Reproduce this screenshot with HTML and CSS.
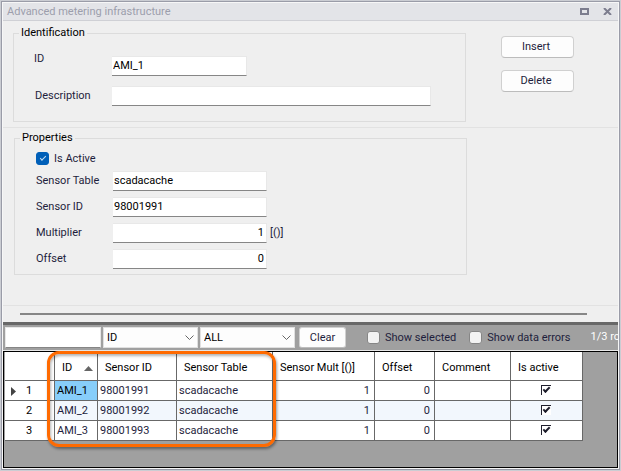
FILE: index.html
```html
<!DOCTYPE html>
<html lang="en">
<head>
    <meta charset="UTF-8">
    <meta name="viewport" content="width=device-width, initial-scale=1" />
    <title>Advanced metering infrastructure</title>
    <link rel="stylesheet" href="styles.css">
</head>
<body>
    <div class="window">
        <header class="titlebar">
            <h1>Advanced metering infrastructure</h1>
            <button class="title-button" type="button" aria-label="Maximize">
                <svg width="9" height="7" viewBox="0 0 9 7"><path d="M1 1h7v5H1z" fill="none" stroke="#7c7d8e" stroke-width="2" /></svg>
            </button>
            <button class="title-button" type="button" aria-label="Close">
                <svg width="9" height="7" viewBox="0 0 9 7"><path d="M1 0l7 7M8 0L1 7" fill="none" stroke="#7c7d8e" stroke-width="2" /></svg>
            </button>
        </header>

        <form class="panel identification">
            <fieldset class="group">
                <legend>Identification</legend>
                <div class="field id-field">
                    <label for="ami-id">ID</label>
                    <input class="text-box id-box" id="ami-id" type="text" value="AMI_1">
                </div>
                <div class="field">
                    <label for="description">Description</label>
                    <input class="text-box description-box" id="description" type="text">
                </div>
            </fieldset>
            <div class="actions">
                <button class="button" type="button">Insert</button>
                <button class="button" type="button">Delete</button>
            </div>
        </form>

        <form class="panel properties">
            <fieldset class="group">
                <legend>Properties</legend>
                <label class="check is-active"><input type="checkbox" checked> Is Active</label>
                <div class="field">
                    <label for="sensor-table">Sensor Table</label>
                    <input class="text-box" id="sensor-table" type="text" value="scadacache">
                </div>
                <div class="field">
                    <label for="sensor-id">Sensor ID</label>
                    <input class="text-box" id="sensor-id" type="text" value="98001991">
                </div>
                <div class="field">
                    <label for="multiplier">Multiplier</label>
                    <input class="text-box number" id="multiplier" type="text" value="1">
                    <span class="unit">[()]</span>
                </div>
                <div class="field">
                    <label for="offset">Offset</label>
                    <input class="text-box number" id="offset" type="text" value="0">
                </div>
            </fieldset>
        </form>

        <div class="splitter"></div>

        <div class="toolbar">
            <input class="filter-text" type="text" aria-label="Filter text">
            <div class="combo">
                <select aria-label="Filter column"><option>ID</option></select>
                <svg width="9" height="5" viewBox="0 0 9 5"><path d="M0.5 0.5l4 4 4-4" fill="none" stroke="#666" /></svg>
            </div>
            <div class="combo">
                <select aria-label="Filter value"><option>ALL</option></select>
                <svg width="9" height="5" viewBox="0 0 9 5"><path d="M0.5 0.5l4 4 4-4" fill="none" stroke="#666" /></svg>
            </div>
            <button class="button clear" type="button">Clear</button>
            <label class="check"><input type="checkbox"> Show selected</label>
            <label class="check"><input type="checkbox"> Show data errors</label>
            <span class="count">1/3 rows</span>
        </div>

        <div class="grid">
            <table>
                <colgroup>
                    <col class="col-row"><col class="col-id"><col class="col-sensor"><col class="col-table">
                    <col class="col-mult"><col class="col-offset"><col class="col-comment"><col class="col-active">
                </colgroup>
                <thead>
                    <tr>
                        <th></th>
                        <th>ID <svg class="sort" width="9" height="5" viewBox="0 0 9 5"><path d="M0 5L4.500 0L9 5z" fill="#666" /></svg></th>
                        <th>Sensor ID</th>
                        <th>Sensor Table</th>
                        <th>Sensor Mult [()]</th>
                        <th>Offset</th>
                        <th>Comment</th>
                        <th>Is active</th>
                    </tr>
                </thead>
                <tbody>
                    <tr>
                        <td class="row-no"><svg class="marker" width="5" height="9" viewBox="0 0 5 9"><path d="M0 0l5 4.500L0 9z" fill="#444" /></svg>1</td>
                        <td class="selected">AMI_1</td>
                        <td>98001991</td>
                        <td>scadacache</td>
                        <td class="number">1</td>
                        <td class="number">0</td>
                        <td></td>
                        <td class="active"><input type="checkbox" aria-label="AMI_1 active" checked></td>
                    </tr>
                    <tr>
                        <td class="row-no">2</td>
                        <td>AMI_2</td>
                        <td>98001992</td>
                        <td>scadacache</td>
                        <td class="number">1</td>
                        <td class="number">0</td>
                        <td></td>
                        <td class="active"><input type="checkbox" aria-label="AMI_2 active" checked></td>
                    </tr>
                    <tr>
                        <td class="row-no">3</td>
                        <td>AMI_3</td>
                        <td>98001993</td>
                        <td>scadacache</td>
                        <td class="number">1</td>
                        <td class="number">0</td>
                        <td></td>
                        <td class="active"><input type="checkbox" aria-label="AMI_3 active" checked></td>
                    </tr>
                </tbody>
            </table>
            <div class="highlight"></div>
        </div>
    </div>
</body>
</html>
```
FILE: styles.css
```css
* {
    margin: 0;
    padding: 0;
    box-sizing: border-box;
}
body {
    display: flex;
    min-height: 100vh;
    padding: 1px;
    background-color: #cbcdd3;
    font-family: Tahoma, Roboto, sans-serif;
    font-size: 11px;
    line-height: 14px;
    color: #1e1e3c;
}
input, select, button {
    font: inherit;
    color: inherit;
}
.window {
    flex: 1;
    min-width: 0;
    display: flex;
    flex-direction: column;
    border: 1px solid #9a9ca8;
    outline: 1px solid #f7f7f7;
    outline-offset: -2px;
    padding: 1px;
    background-color: #efefef;
}

/* title bar */
.titlebar {
    display: flex;
    align-items: center;
    height: 18px;
    gap: 14px;
    padding: 0 6px 0 4px;
    background-color: #e3e4e8;
    border-bottom: 1px solid #cfd0d5;
}
.titlebar h1 {
    flex: 1;
    font-size: 11px;
    font-weight: normal;
    color: #9c9eac;
}
.title-button {
    display: flex;
    border: none;
    background: none;
}

/* form panels */
.panel {
    display: flex;
    align-items: flex-start;
    border-bottom: 1px solid #e2e2e2;
}
.identification {
    padding: 5px 10px;
}
.properties {
    padding: 3px 11px 30px;
}
.group {
    flex: 0 1 453px;
    min-width: 0;
    border: 1px solid #dcdcdc;
}
.group legend {
    margin-left: 5px;
    padding: 0 2px;
    color: #000;
}
.field, .is-active {
    margin-left: 21px;
}
.field {
    display: flex;
    align-items: center;
    height: 20px;
    margin-bottom: 6px;
}
.field label {
    flex: 0 0 77px;
}
.identification .field {
    margin: 10px 0 15px 21px;
}
.identification .id-field {
    align-items: flex-start;
    margin: 16px 0 0 20px;
}
.id-field label {
    flex-basis: 78px;
    margin-top: -4px;
}
.text-box {
    flex: 0 1 154px;
    min-width: 0;
    height: 20px;
    padding: 0 2px 1px 1px;
    border: 1px solid #e8e8e8;
    border-left: none;
    border-bottom-color: #868686;
    background-color: #fff;
    color: #000;
}
.id-box {
    flex-basis: 135px;
}
.description-box {
    flex-basis: 319px;
}
.number {
    text-align: right;
}
.unit {
    margin-left: 3px;
}
.actions {
    display: flex;
    flex-direction: column;
    gap: 12px;
    margin: 10px 0 0 35px;
}
.button {
    width: 73px;
    height: 22px;
    border: 1px solid #d0d0d0;
    border-bottom-color: #bcbcbc;
    border-radius: 4px;
    background-color: #fdfdfd;
}
.actions .button {
    padding-right: 3px;
}

/* tick boxes */
.check {
    display: flex;
    align-items: center;
    gap: 5px;
    white-space: nowrap;
}
.check input {
    appearance: none;
    flex: none;
    position: relative;
    width: 13px;
    height: 13px;
    border: 1px solid #868686;
    border-radius: 3px;
    background-color: #f3f3f3;
}
.check input:checked {
    border-color: #005fb8;
    background-color: #005fb8;
}
.check input:checked::after {
    content: "";
    position: absolute;
    top: 3px;
    left: 3px;
    width: 5px;
    height: 2px;
    border: solid #c8e0f4;
    border-width: 0 0 1px 1px;
    transform: rotate(-45deg);
}
.is-active {
    height: 13px;
    margin-top: 7px;
    margin-bottom: 6px;
}
.properties .field:last-child {
    margin-bottom: 5px;
}

.splitter {
    height: 2px;
    margin: 7px 31px 7px 17px;
    background-color: #868686;
}

/* filter bar */
.toolbar {
    display: flex;
    align-items: center;
    height: 29px;
    padding-left: 2px;
    overflow: hidden;
    border-top: 3px solid #686868;
    border-bottom: 1px solid #e8e8e8;
    background-color: #a0a0a0;
}
.toolbar > * {
    flex: none;
}
.filter-text {
    width: 96px;
    height: 21px;
    margin-right: 2px;
    padding: 0 3px;
    border: 1px solid #e8e8e8;
    border-bottom-color: #868686;
    background-color: #fff;
}
.combo {
    position: relative;
    width: 95px;
    height: 21px;
    margin-right: 2px;
}
.combo select {
    appearance: none;
    width: 100%;
    height: 100%;
    padding-left: 3px;
    border: 1px solid #e0e0e0;
    border-radius: 0;
    background-color: #fdfdfd;
    color: #000;
}
.combo svg {
    position: absolute;
    top: 8px;
    right: 4px;
}
.clear {
    width: 47px;
    height: 21px;
    margin-left: 2px;
    border-radius: 3px;
}
.toolbar .check {
    margin-left: 21px;
}
.toolbar .check + .check {
    margin-left: 13px;
}
.count {
    margin-left: 20px;
    padding-bottom: 2px;
    color: #fff;
    white-space: nowrap;
}

/* data grid */
.grid {
    position: relative;
    flex: 1;
    min-height: 117px;
    padding-left: 1px;
    border: 1px solid #000;
    background-color: #a0a0a0;
}
table {
    table-layout: fixed;
    width: 578px;
    border-spacing: 0;
    background-color: #fff;
}
.col-row { width: 50px; }
.col-id { width: 43px; }
.col-sensor { width: 79px; }
.col-table { width: 96px; }
.col-mult { width: 102px; }
.col-offset { width: 60px; }
.col-comment { width: 76px; }
.col-active { width: 72px; }
th, td {
    border: solid #686868;
    border-width: 0 1px 1px 0;
    white-space: nowrap;
    text-align: left;
}
th {
    height: 29px;
    padding: 3px 0 0 7px;
    font-weight: normal;
    color: #000;
}
td {
    height: 20px;
    padding: 0 2px;
}
tbody tr:nth-child(even) {
    background-color: #f2f7fd;
}
tbody tr:nth-child(even) .row-no {
    background-color: #fff;
}
td.number {
    text-align: right;
    padding-right: 4px;
}
td.selected {
    background-color: #87cefa;
    color: #000;
}
td.row-no {
    position: relative;
    padding-left: 21px;
    color: #000;
}
.sort {
    margin-left: 9px;
}
.marker {
    position: absolute;
    top: 6px;
    left: 6px;
}
td.active {
    padding: 0 4px 1px 2px;
}
.active input {
    appearance: none;
    display: block;
    position: relative;
    width: 10px;
    height: 10px;
    margin: 0 auto;
    border: solid #1e1e2c;
    border-width: 1px 0 0 1px;
    background-color: #fff;
}
.active input:checked::after {
    content: "";
    position: absolute;
    top: 1px;
    left: 1px;
    width: 5px;
    height: 2px;
    border: solid #1e1e2c;
    border-width: 0 0 2px 2px;
    transform: rotate(-45deg);
}

/* frame over the identifying columns */
.highlight {
    position: absolute;
    top: -1px;
    left: 43px;
    width: 229px;
    height: 96px;
    border: 3px solid #ff6a00;
    border-radius: 12px;
    box-shadow: 1px 2px 3px rgba(0, 0, 0, 0.4), inset 1px 2px 3px rgba(0, 0, 0, 0.3);
    pointer-events: none;
}
```
